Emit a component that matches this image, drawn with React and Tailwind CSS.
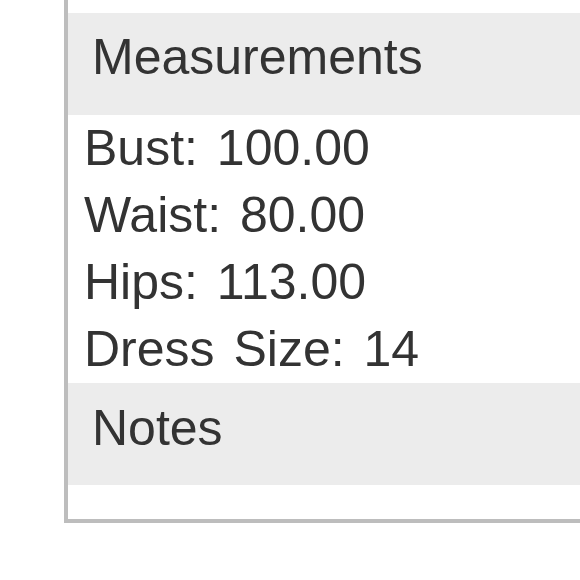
import React from 'react';

const measurements = [
  { label: 'Bust', value: '100.00' },
  { label: 'Waist', value: '80.00' },
  { label: 'Hips', value: '113.00' },
  { label: 'Dress Size', value: '14' },
];

export default function App() {
  return (
    <div
      className="w-[580px] h-[580px] bg-white overflow-hidden text-[50px] text-[#333333] [word-spacing:5px]"
      style={{ fontFamily: '"Liberation Sans", Arial, sans-serif' }}
    >
      <div className="ml-16 border-l-4 border-b-4 border-[#bdbdbd]">
        <div className="h-[13px]" />
        {/* Measurements header */}
        <div className="h-[102px] bg-[#ececec] pl-6 pt-[19px] leading-[50px]">Measurements</div>
        <div className="pl-4">
          {measurements.map((m) => (
            <div key={m.label} className="h-[67px] leading-[67px] whitespace-nowrap">
              {m.label}: {m.value}
            </div>
          ))}
        </div>
        {/* Notes header */}
        <div className="h-[102px] bg-[#ececec] pl-6 pt-5 leading-[50px]">Notes</div>
        <div className="h-[34px]" />
      </div>
    </div>
  );
}
